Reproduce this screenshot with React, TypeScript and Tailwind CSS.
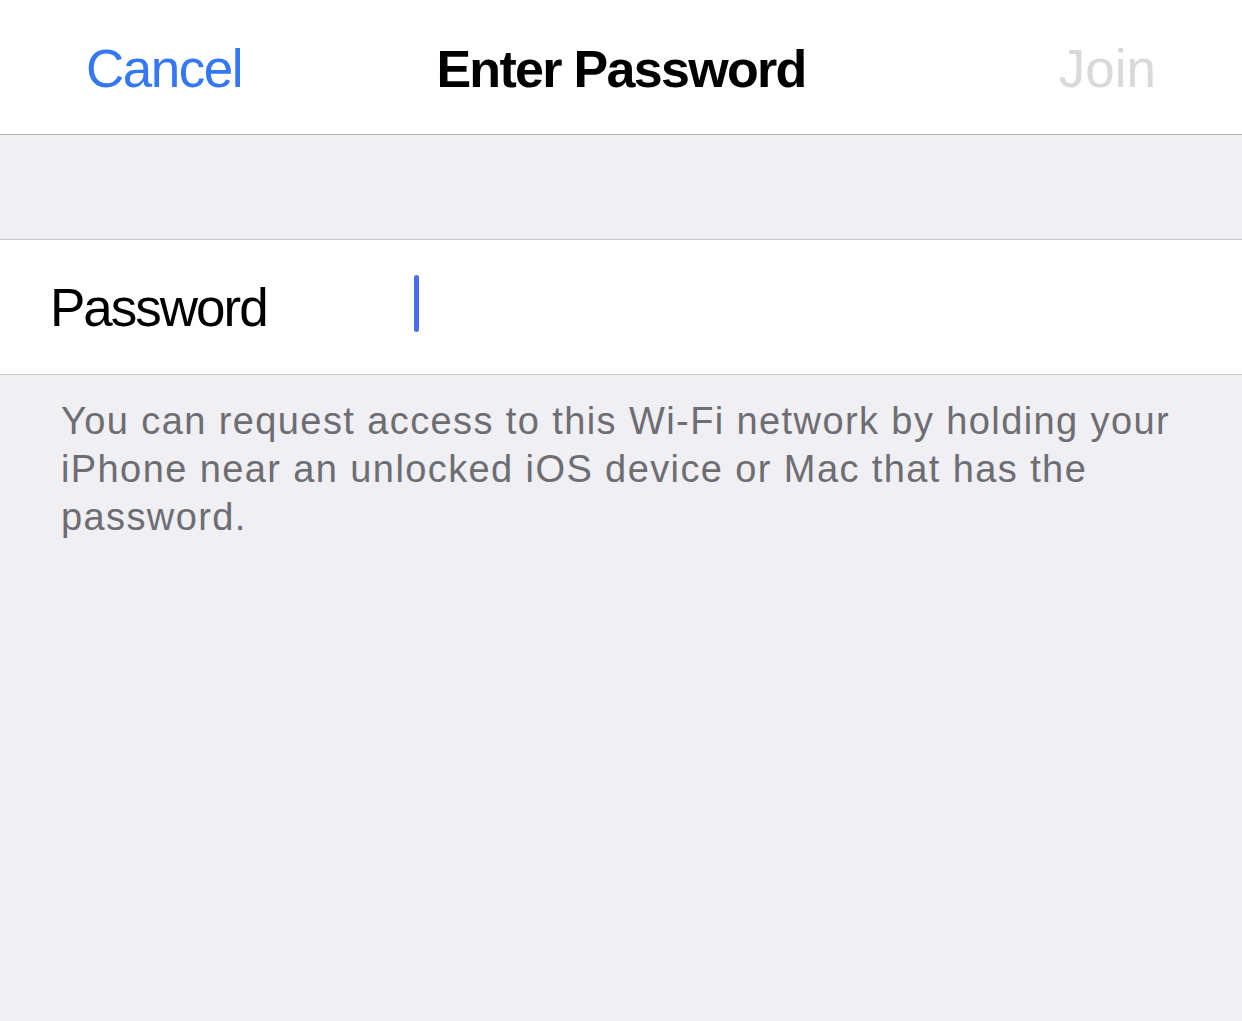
export default function App() {
  return (
    <div
      className="min-h-[1021px] w-full bg-[#efeff4]"
      style={{ fontFamily: '"Liberation Sans", Arial, sans-serif' }}
    >
      <header className="grid h-[135px] grid-cols-[1fr_auto_1fr] items-center border-b border-[#b2b2b2] bg-white px-[86px] pt-[3px]">
        <span className="justify-self-start whitespace-nowrap text-[53px] tracking-[-1.5px] text-[#3478f6]">Cancel</span>
        <span className="justify-self-center whitespace-nowrap text-[52px] font-bold tracking-[-1.7px] text-black">
          Enter Password
        </span>
        <span className="justify-self-end whitespace-nowrap text-[53px] text-[#d9d9d9]">Join</span>
      </header>

      <div className="h-[104px]" />

      <div className="flex h-[136px] items-center border-y border-[#c8c7cc] bg-white pl-[50px]">
        <span className="w-[364px] pt-[2px] text-[53px] tracking-[-2px] text-black">Password</span>
        <div className="mb-[7px] h-[57px] w-[5px] rounded-full bg-[#4a6cf0]" />
      </div>

      <p className="px-[61px] pt-[22px] text-[38px] leading-[48px] tracking-[1.4px] text-[#6d6d72]">
        You can request access to this Wi-Fi network by holding your iPhone near an unlocked iOS device or Mac that
        has the password.
      </p>
    </div>
  );
}
